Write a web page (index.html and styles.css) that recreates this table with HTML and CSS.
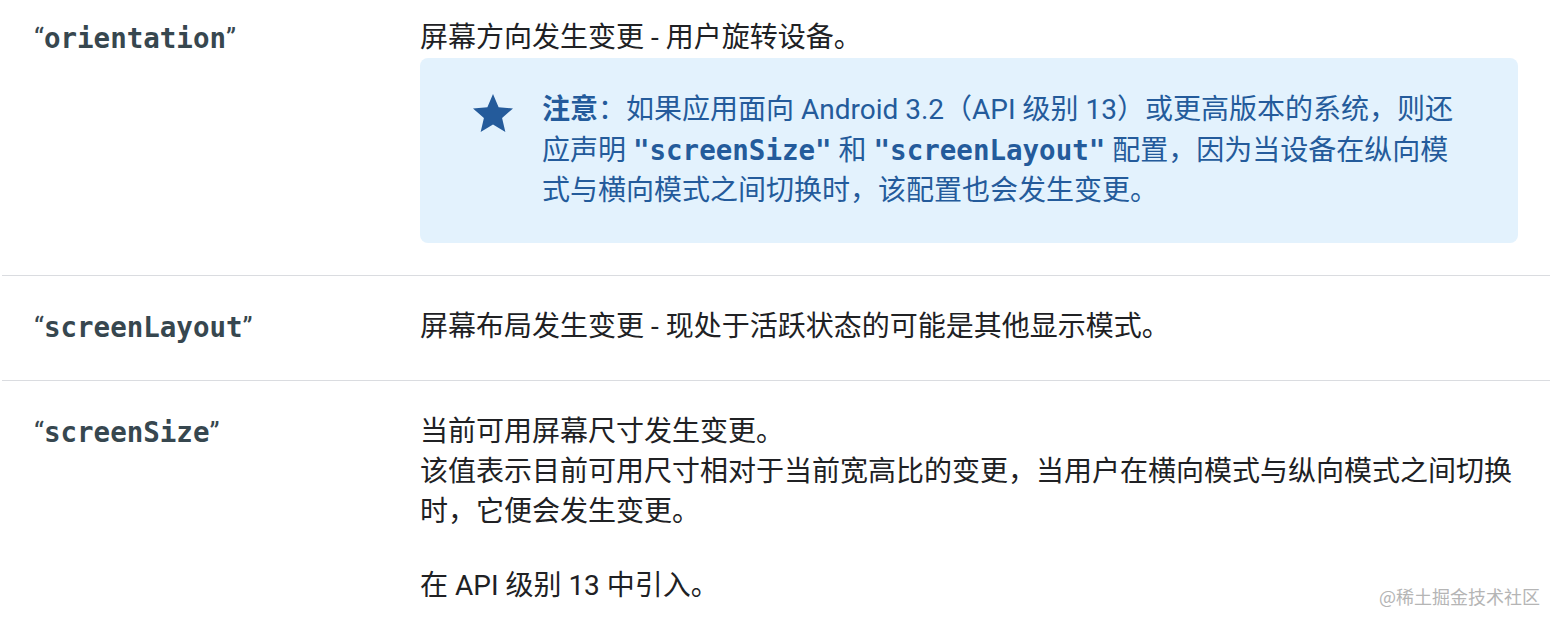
FILE: index.html
```html
<!DOCTYPE html>
<html lang="zh-CN">
<head>
    <meta charset="UTF-8">
    <meta name="viewport" content="width=device-width, initial-scale=1.0">
    <title>configChanges</title>
    <link rel="stylesheet" href="styles.css">
</head>
<body>
<table class="props">
    <colgroup>
        <col class="col-name">
        <col>
    </colgroup>
    <tbody>
    <!-- orientation -->
    <tr class="first">
        <td class="name">“<code>orientation</code>”</td>
        <td>
            屏幕方向发生变更 - 用户旋转设备。
            <aside class="note">
                <svg class="note-icon" viewBox="0 0 24 24" width="48" height="48" aria-hidden="true">
                    <path d="M12 17.27L18.18 21l-1.64-7.03L22 9.24l-7.19-.61L12 2 9.19 8.63 2 9.24l5.46 4.73L5.82 21z"/>
                </svg>
                <div class="note-text">
                    <strong>注意</strong>：如果应用面向 Android 3.2（API 级别 13）或更高版本的系统，则还应声明 <strong><code>"screenSize"</code></strong> 和 <strong><code>"screenLayout"</code></strong> 配置，因为当设备在纵向模式与横向模式之间切换时，该配置也会发生变更。
                </div>
            </aside>
        </td>
    </tr>
    <!-- screenLayout -->
    <tr>
        <td class="name">“<code>screenLayout</code>”</td>
        <td>屏幕布局发生变更 - 现处于活跃状态的可能是其他显示模式。</td>
    </tr>
    <!-- screenSize -->
    <tr>
        <td class="name">“<code>screenSize</code>”</td>
        <td>
            当前可用屏幕尺寸发生变更。<br>
            该值表示目前可用尺寸相对于当前宽高比的变更，当用户在横向模式与纵向模式之间切换时，它便会发生变更。
            <p class="since">在 API 级别 13 中引入。</p>
        </td>
    </tr>
    </tbody>
</table>
<div class="watermark">@稀土掘金技术社区</div>
</body>
</html>
```

FILE: styles.css
```css
/* Базовые цвета */
:root {
    --color-text: #202124;
    --color-code: #37474f;
    --color-border: #dadce0;
    --color-note-bg: #e3f2fd;
    --color-note-text: #245b9b;
}

body {
    margin: 0;
    height: 624px;
    overflow: hidden;
    background: #ffffff;
    color: var(--color-text);
    font-family: Roboto, "Noto Sans CJK SC", sans-serif;
    font-size: 28px;
    line-height: 40px;
    position: relative;
}

code {
    font-family: "DejaVu Sans Mono", "Liberation Mono", monospace;
    font-size: 27.5px;
    font-weight: bold;
}

/* Таблица свойств */
.props {
    width: 1548px;
    margin-left: 2px;
    border-collapse: collapse;
    table-layout: fixed;
}

.col-name {
    width: 386px;
}

.props td {
    padding: 31px 32px 32px;
    vertical-align: top;
    border-bottom: 1px solid var(--color-border);
}

.props tr.first td {
    padding-top: 18px;
}

.props tr:last-child td {
    border-bottom: none;
}

.name {
    color: var(--color-code);
}

/* Заметка */
.note {
    display: flex;
    gap: 25px;
    margin: 0;
    padding: 32px 48px 32px 49px;
    background: var(--color-note-bg);
    color: var(--color-note-text);
    border-radius: 8px;
}

.note-icon {
    flex-shrink: 0;
    fill: var(--color-note-text);
}

.note-text {
    flex: 1;
}

.note strong {
    font-weight: bold;
}

.since {
    margin: 34px 0 0;
}

.watermark {
    position: absolute;
    right: 20px;
    bottom: 16px;
    font-family: "Noto Sans CJK SC", sans-serif;
    font-size: 18px;
    line-height: 24px;
    color: #b5b5b5;
    text-shadow: 0 0 1px #ffffff;
}
```
